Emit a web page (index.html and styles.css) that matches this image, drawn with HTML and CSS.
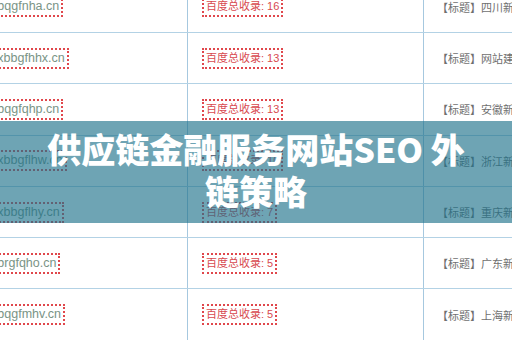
FILE: index.html
```html
<!DOCTYPE html>
<html lang="zh-CN">
<head>
<meta charset="utf-8">
<title>供应链金融服务网站SEO 外链策略</title>
<link rel="stylesheet" href="styles.css">
</head>
<body>
<div class="page">
  <div class="table">
    <div class="row">
      <div class="cell c1"><span class="box dom">www.bqgfnha.cn</span></div>
      <div class="cell c2"><span class="box rec">百度总收录: 16</span></div>
      <div class="cell c3">【标题】四川新闻网_首页资讯</div>
    </div>
    <div class="row">
      <div class="cell c1"><span class="box dom">www.xbbgfhhx.cn</span></div>
      <div class="cell c2"><span class="box rec">百度总收录: 13</span></div>
      <div class="cell c3">【标题】网站建设与推广</div>
    </div>
    <div class="row">
      <div class="cell c1"><span class="box dom">www.bqgfqhp.cn</span></div>
      <div class="cell c2"><span class="box rec">百度总收录: 13</span></div>
      <div class="cell c3">【标题】安徽新闻网_首页资讯</div>
    </div>
    <div class="row">
      <div class="cell c1"><span class="box dom">www.xbbgflhw.cn</span></div>
      <div class="cell c2"><span class="box rec">百度总收录: 10</span></div>
      <div class="cell c3">【标题】浙江新闻网_首页资讯</div>
    </div>
    <div class="row">
      <div class="cell c1"><span class="box dom">www.xbbgflhy.cn</span></div>
      <div class="cell c2"><span class="box rec">百度总收录: 7</span></div>
      <div class="cell c3">【标题】重庆新闻网_首页资讯</div>
    </div>
    <div class="row">
      <div class="cell c1"><span class="box dom">www.brgfqho.cn</span></div>
      <div class="cell c2"><span class="box rec">百度总收录: 5</span></div>
      <div class="cell c3">【标题】广东新闻网_首页资讯</div>
    </div>
    <div class="row">
      <div class="cell c1"><span class="box dom">www.bqgfmhv.cn</span></div>
      <div class="cell c2"><span class="box rec">百度总收录: 5</span></div>
      <div class="cell c3">【标题】上海新闻网_首页资讯</div>
    </div>
  </div>
  <div class="banner">
    <h1 class="title">供应链金融服务网站SEO 外链策略</h1>
  </div>
</div>
</body>
</html>
```
FILE: styles.css
```css
html, body {
  margin: 0;
  padding: 0;
  width: 512px;
  height: 340px;
  overflow: hidden;
  background: #ffffff;
}
.page {
  position: relative;
  width: 512px;
  height: 340px;
  overflow: hidden;
  font-family: "Liberation Sans", "Noto Sans CJK SC", sans-serif;
}
.table {
  display: flex;
  flex-direction: column;
  margin-top: -18.3px;
  margin-left: -40px;
  width: 640px;
}
.row {
  display: grid;
  grid-template-columns: 228px 236px 1fr;
  height: 51.3px;
  box-sizing: border-box;
  border-bottom: 1px solid #b3d2e5;
}
.cell {
  display: flex;
  align-items: center;
  box-sizing: border-box;
  white-space: nowrap;
  overflow: hidden;
}
.c1 {
  border-right: 1px solid #a6c8df;
  padding-left: 3.5px;
}
.c2 {
  border-right: 1px solid #a6c8df;
  padding-left: 14px;
}
.c3 {
  padding-left: 13px;
  font-size: 11px;
  color: #6f6f6f;
  font-family: "Noto Sans CJK SC", sans-serif;
}
.box {
  display: inline-block;
  border: 2px dotted #e0474c;
  padding: 0 2px;
  height: 17px;
  line-height: 17px;
}
.dom {
  font-size: 12.5px;
  color: #7a9486;
}
.rec {
  font-size: 11px;
  color: #d84a50;
}
.banner {
  position: absolute;
  left: 0;
  right: 0;
  top: 121px;
  height: 102px;
  box-sizing: border-box;
  padding-bottom: 4px;
  background: rgba(28, 112, 138, 0.64);
  display: flex;
  align-items: center;
  justify-content: center;
}
.title {
  margin: 0;
  width: 430px;
  text-align: center;
  color: #ffffff;
  font-family: "Noto Sans CJK SC", sans-serif;
  font-weight: 900;
  font-size: 34px;
  line-height: 42px;
}
```
